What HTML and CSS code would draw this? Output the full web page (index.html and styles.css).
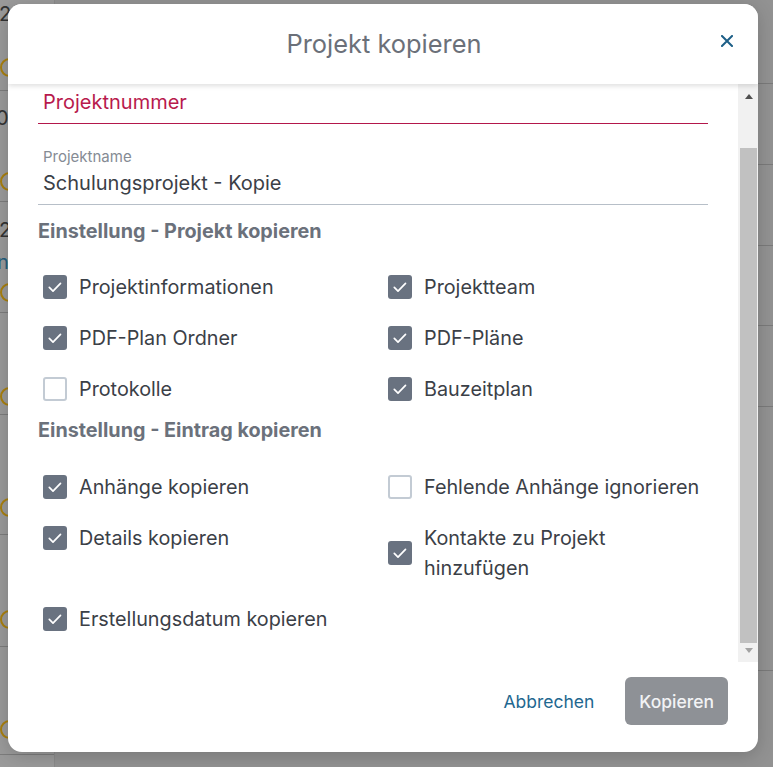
FILE: index.html
```html
<!DOCTYPE html>
<html lang="de">
<head>
<meta charset="utf-8">
<title>Projekt kopieren</title>
<link rel="stylesheet" href="styles.css">
</head>
<body>
<div class="page">
  <div class="side">
    <div class="srow r1"><span class="num n1">22</span><span class="ring"></span></div>
    <div class="srow r2"><span class="num n2">02</span><span class="ring"></span></div>
    <div class="srow r3"><span class="num n3">2</span><span class="link">n</span><span class="ring"></span></div>
    <div class="srow r4"><span class="ring"></span></div>
    <div class="srow r5"><span class="ring"></span></div>
    <div class="srow r6"><span class="ring"></span></div>
    <div class="srow r7"><span class="ring"></span></div>
  </div>
  <div class="main">
    <div class="mrow m1"></div>
    <div class="mrow m2"></div>
    <div class="mrow m3"></div>
    <div class="mrow m4"></div>
    <div class="mrow m5"></div>
    <div class="mrow m6"></div>
  </div>
</div>

<div class="dialog" role="dialog" aria-label="Projekt kopieren">
  <header class="dlg-head">
    <span></span>
    <h1 class="dlg-title">Projekt kopieren</h1>
    <button class="close" aria-label="Schließen">
      <svg width="12" height="12" viewBox="0 0 12 12"><path d="M1 1L11 11M11 1L1 11" stroke="currentColor" stroke-width="2" stroke-linecap="square" fill="none"/></svg>
    </button>
  </header>
  <div class="dlg-body">
    <div class="content">
      <div class="field field-error">
        <div class="field-value">Projektnummer</div>
      </div>
      <div class="field field-filled">
        <div class="field-label">Projektname</div>
        <div class="field-value">Schulungsprojekt - Kopie</div>
      </div>

      <h2 class="section-title">Einstellung - Projekt kopieren</h2>
      <div class="options">
        <label class="opt"><span class="cb on"><svg viewBox="0 0 24 24"><path d="M6.3 12.4L10 16.1L17.5 8.4"/></svg></span><span class="opt-text">Projektinformationen</span></label>
        <label class="opt"><span class="cb on"><svg viewBox="0 0 24 24"><path d="M6.3 12.4L10 16.1L17.5 8.4"/></svg></span><span class="opt-text">Projektteam</span></label>
        <label class="opt"><span class="cb on"><svg viewBox="0 0 24 24"><path d="M6.3 12.4L10 16.1L17.5 8.4"/></svg></span><span class="opt-text">PDF-Plan Ordner</span></label>
        <label class="opt"><span class="cb on"><svg viewBox="0 0 24 24"><path d="M6.3 12.4L10 16.1L17.5 8.4"/></svg></span><span class="opt-text">PDF-Pläne</span></label>
        <label class="opt"><span class="cb"></span><span class="opt-text">Protokolle</span></label>
        <label class="opt"><span class="cb on"><svg viewBox="0 0 24 24"><path d="M6.3 12.4L10 16.1L17.5 8.4"/></svg></span><span class="opt-text">Bauzeitplan</span></label>
      </div>

      <h2 class="section-title second">Einstellung - Eintrag kopieren</h2>
      <div class="options opts2">
        <label class="opt"><span class="cb on"><svg viewBox="0 0 24 24"><path d="M6.3 12.4L10 16.1L17.5 8.4"/></svg></span><span class="opt-text">Anhänge kopieren</span></label>
        <label class="opt"><span class="cb"></span><span class="opt-text">Fehlende Anhänge ignorieren</span></label>
        <label class="opt"><span class="cb on"><svg viewBox="0 0 24 24"><path d="M6.3 12.4L10 16.1L17.5 8.4"/></svg></span><span class="opt-text">Details kopieren</span></label>
        <label class="opt"><span class="cb on"><svg viewBox="0 0 24 24"><path d="M6.3 12.4L10 16.1L17.5 8.4"/></svg></span><span class="opt-text narrow">Kontakte zu Projekt hinzufügen</span></label>
        <label class="opt"><span class="cb on"><svg viewBox="0 0 24 24"><path d="M6.3 12.4L10 16.1L17.5 8.4"/></svg></span><span class="opt-text">Erstellungsdatum kopieren</span></label>
      </div>
    </div>
    <div class="scrollbar" aria-hidden="true">
      <div class="sb-btn up"><span class="tri-up"></span></div>
      <div class="sb-track"><div class="sb-thumb"></div></div>
      <div class="sb-btn down"><span class="tri-down"></span></div>
    </div>
  </div>
  <footer class="dlg-foot">
    <button class="btn-text">Abbrechen</button>
    <button class="btn-primary">Kopieren</button>
  </footer>
</div>
</body>
</html>
```

FILE: styles.css
```css
* { box-sizing: border-box; }

html, body {
  margin: 0;
  padding: 0;
  width: 773px;
  height: 767px;
  overflow: hidden;
  font-family: Inter, "Noto Sans", sans-serif;
}

body {
  background: #909090;
  position: relative;
}

/* ---------- dimmed background page ---------- */
.page {
  display: flex;
  height: 767px;
}

.side {
  width: 55px;
  background: #9a9a9a;
  border-right: 1px solid #8a8a8a;
  display: flex;
  flex-direction: column;
}

.srow {
  display: flex;
  flex-direction: column;
  justify-content: flex-end;
  border-bottom: 1px solid #7c7c7c;
}

.r1 { height: 91px; padding-bottom: 13px; }
.r2 { height: 111px; padding-bottom: 10px; }
.r3 { height: 111px; padding-bottom: 10px; }
.r4 { height: 102px; padding-bottom: 8px; }
.r5 { height: 120px; padding-bottom: 17px; }
.r6 { height: 112px; padding-bottom: 17px; }
.r7 { height: 108px; padding-bottom: 15px; }

.num {
  font-size: 20px;
  line-height: 20px;
  color: #333;
  margin-bottom: auto;
  white-space: nowrap;
}
.n1 { margin-top: 4px; margin-left: -1px; }
.n2 { margin-top: 17px; margin-left: -4px; }
.n3 { margin-top: 18px; margin-left: -1px; margin-bottom: 12px; }

.link {
  font-size: 20px;
  line-height: 20px;
  color: #235f7e;
  margin-left: -3px;
  margin-bottom: auto;
}

.ring {
  width: 19px;
  height: 19px;
  border: 2.5px solid #a87f0e;
  border-radius: 50%;
}

.main {
  flex: 1;
  display: flex;
  flex-direction: column;
  background: #929292;
}
.mrow { border-bottom: 1px solid #7a7a7a; }
.m1 { height: 84px; }
.m2 { height: 81px; }
.m3 { height: 81px; }
.m4 { height: 80px; }
.m5 { height: 81px; }
.m6 { height: 264px; }

/* ---------- dialog ---------- */
.dialog {
  position: absolute;
  left: 8px;
  top: 4px;
  width: 750px;
  height: 748px;
  background: #fff;
  border-radius: 14px;
  box-shadow: 0 4px 18px rgba(0, 0, 0, 0.18);
  display: flex;
  flex-direction: column;
  overflow: hidden;
}

.dlg-head {
  height: 80px;
  flex: none;
  display: grid;
  grid-template-columns: 1fr auto 1fr;
  align-items: center;
  box-shadow: 0 2px 5px rgba(0, 0, 0, 0.13);
  position: relative;
  z-index: 1;
  background: #fff;
}

.dlg-title {
  margin: 0 0 0 2px;
  font-size: 25.4px;
  font-weight: 400;
  color: #6b7079;
  line-height: 32px;
}

.close {
  justify-self: end;
  margin-right: 25px;
  margin-top: -7px;
  width: 12px;
  height: 12px;
  padding: 0;
  border: 0;
  background: none;
  color: #1d5f87;
  display: flex;
}

.dlg-body {
  height: 578px;
  flex: none;
  display: flex;
}

.content {
  flex: 1;
  padding: 6px 30px 0 30px;
  overflow: hidden;
}

.field {
  border-bottom: 1px solid #b7bfc8;
  padding-left: 5px;
}

.field-value {
  font-size: 20px;
  line-height: 24px;
  color: #3b4047;
}

.field-error {
  border-bottom-color: #b3174b;
  padding-bottom: 9px;
}
.field-error .field-value { color: #b81a4d; }

.field-filled {
  margin-top: 25px;
  padding-bottom: 9px;
}

.field-label {
  font-size: 15px;
  line-height: 16px;
  color: #858b94;
  margin-bottom: 6px;
}

.section-title {
  margin: 14px 0 0;
  font-size: 19.8px;
  line-height: 24px;
  font-weight: 700;
  color: #6b717b;
}

.options {
  display: grid;
  grid-template-columns: 1fr 1fr;
  column-gap: 20px;
  row-gap: 21px;
  margin-top: 29px;
  align-items: start;
}
.opts2 { margin-top: 30px; }

.opt {
  display: flex;
  align-items: center;
  gap: 12px;
  padding-left: 5px;
  font-size: 19.8px;
  line-height: 30px;
  color: #3b4047;
}

.opt-text { white-space: nowrap; }
.opt-text.narrow { white-space: normal; max-width: 230px; }

.cb {
  flex: none;
  width: 24px;
  height: 24px;
  border-radius: 3px;
  border: 2px solid #c3cbd4;
  background: #fff;
  display: flex;
}
.cb.on {
  border: 0;
  background: #697280;
}
.cb svg {
  width: 24px;
  height: 24px;
  fill: none;
  stroke: #fff;
  stroke-width: 1.7;
  stroke-linecap: round;
  stroke-linejoin: round;
}

/* ---------- scrollbar ---------- */
.scrollbar {
  width: 20px;
  flex: none;
  background: #f1f1f1;
  display: flex;
  flex-direction: column;
}
.sb-btn {
  flex: none;
  display: flex;
  justify-content: center;
  padding-left: 1px;
}
.sb-btn.up { height: 23px; align-items: flex-end; padding-bottom: 8px; }
.sb-btn.down { height: 19px; align-items: flex-start; padding-top: 5px; }
.sb-track { flex: 1; }
.sb-thumb {
  margin: 41px 1px 0 2px;
  height: 495px;
  background: #c1c1c1;
}
.tri-up {
  width: 0; height: 0;
  border-left: 4.5px solid transparent;
  border-right: 4.5px solid transparent;
  border-bottom: 5px solid #505050;
}
.tri-down {
  width: 0; height: 0;
  border-left: 4.5px solid transparent;
  border-right: 4.5px solid transparent;
  border-top: 5px solid #a3a3a3;
}

/* ---------- footer ---------- */
.dlg-foot {
  flex: 1;
  display: flex;
  justify-content: flex-end;
  align-items: flex-start;
  padding: 15px 30px 0 0;
  gap: 15px;
}

.btn-text, .btn-primary {
  font-family: Inter, "Noto Sans", sans-serif;
  font-size: 17.5px;
  height: 48px;
  border: 0;
  border-radius: 6px;
  padding: 0 16px;
  cursor: pointer;
}
.btn-text {
  background: none;
  color: #1f6890;
  padding: 0 16px 0 14px;
}
.btn-primary {
  background: #8e9196;
  color: #f2f3f5;
  font-weight: 500;
  padding: 0 14px;
}
```
